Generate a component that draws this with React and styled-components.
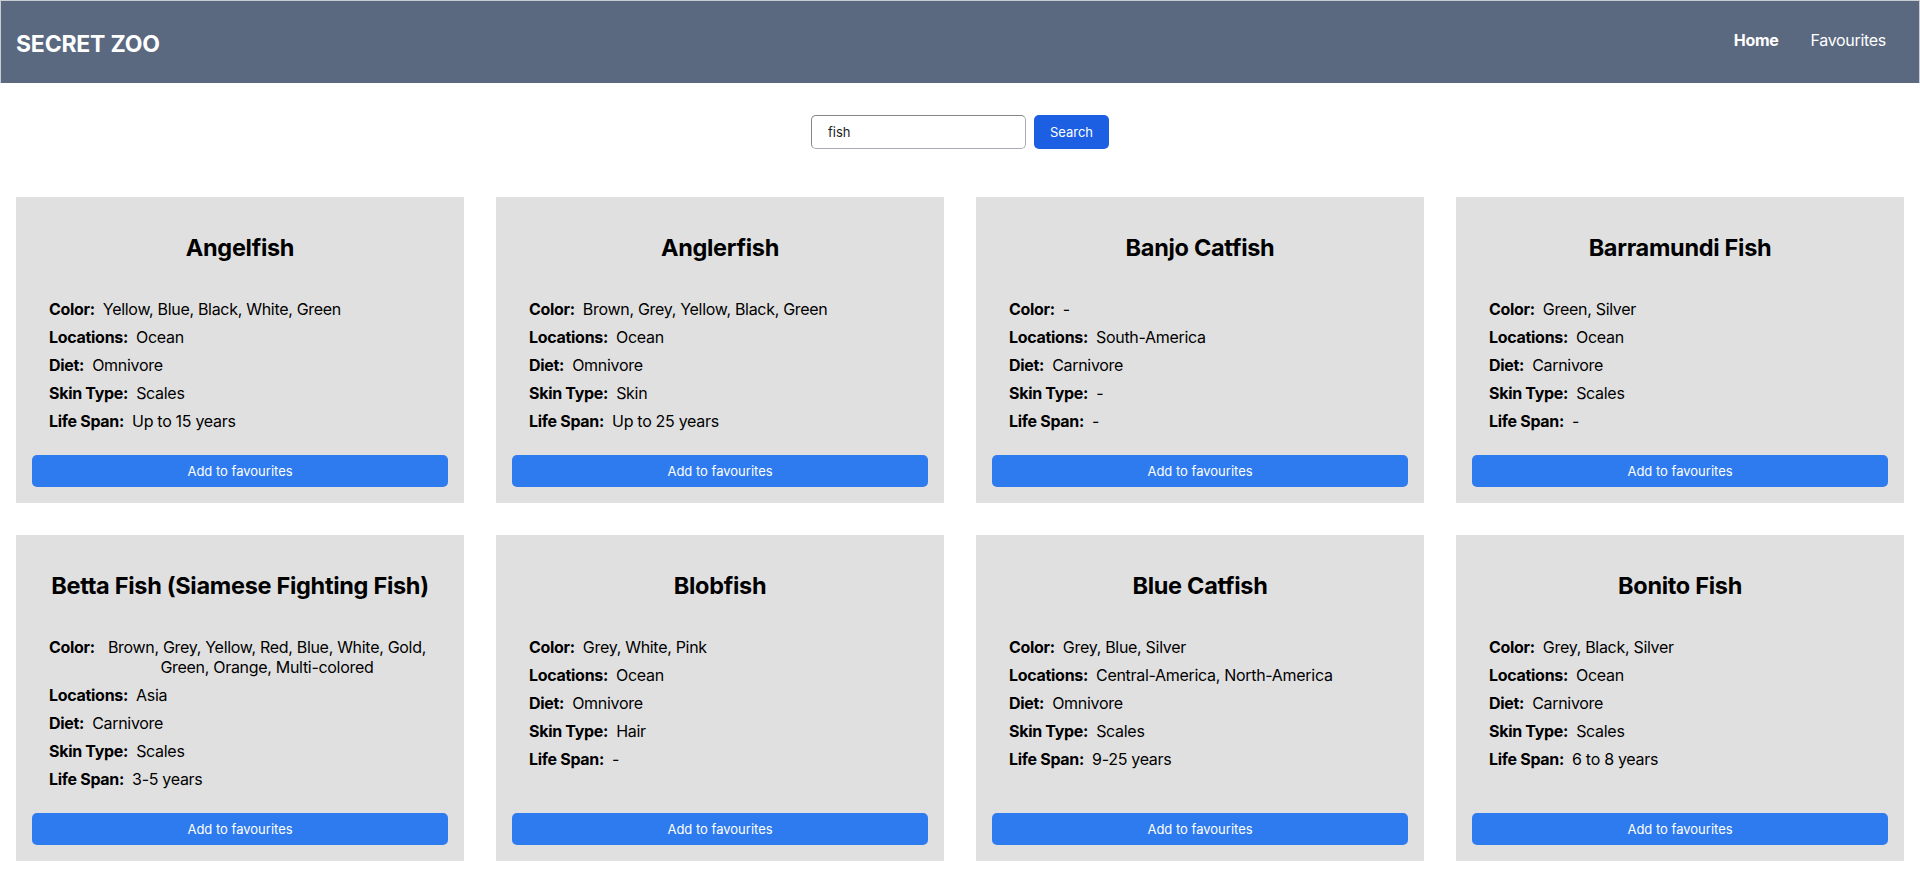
import styled, { createGlobalStyle } from 'styled-components'

const GlobalStyle = createGlobalStyle`
  * { box-sizing: border-box; }
  body {
    margin: 0;
    background: #fff;
    font-family: Inter, 'Noto Sans', sans-serif;
    color: #000;
  }
`

const animals = [
  { name: 'Angelfish', color: 'Yellow, Blue, Black, White, Green', locations: 'Ocean', diet: 'Omnivore', skin: 'Scales', life: 'Up to 15 years' },
  { name: 'Anglerfish', color: 'Brown, Grey, Yellow, Black, Green', locations: 'Ocean', diet: 'Omnivore', skin: 'Skin', life: 'Up to 25 years' },
  { name: 'Banjo Catfish', color: '-', locations: 'South-America', diet: 'Carnivore', skin: '-', life: '-' },
  { name: 'Barramundi Fish', color: 'Green, Silver', locations: 'Ocean', diet: 'Carnivore', skin: 'Scales', life: '-' },
  { name: 'Betta Fish (Siamese Fighting Fish)', color: 'Brown, Grey, Yellow, Red, Blue, White, Gold, Green, Orange, Multi-colored', locations: 'Asia', diet: 'Carnivore', skin: 'Scales', life: '3-5 years' },
  { name: 'Blobfish', color: 'Grey, White, Pink', locations: 'Ocean', diet: 'Omnivore', skin: 'Hair', life: '-' },
  { name: 'Blue Catfish', color: 'Grey, Blue, Silver', locations: 'Central-America, North-America', diet: 'Omnivore', skin: 'Scales', life: '9-25 years' },
  { name: 'Bonito Fish', color: 'Grey, Black, Silver', locations: 'Ocean', diet: 'Carnivore', skin: 'Scales', life: '6 to 8 years' },
]

const Header = styled.header`
  display: flex;
  align-items: center;
  justify-content: space-between;
  height: 83px;
  padding: 0 33px 0 15px;
  background: #5a6980;
  border: 1px solid #c9cdd3;
  border-bottom: none;
`

const Logo = styled.h1`
  margin: 0;
  padding-top: 4px;
  color: #fff;
  font-size: 23px;
  font-weight: 700;
  letter-spacing: -0.2px;
`

const Nav = styled.nav`
  display: flex;
  gap: 32px;
  padding-bottom: 4px;
`

const NavLink = styled.a`
  color: #fff;
  font-size: 16px;
  font-weight: ${p => (p.$active ? 700 : 400)};
  letter-spacing: -0.3px;
  text-decoration: none;
  cursor: pointer;
`

const SearchBar = styled.form`
  display: flex;
  justify-content: center;
  gap: 8px;
  margin: 32px 0 48px;
`

const SearchInput = styled.input`
  width: 215px;
  height: 34px;
  padding: 0 16px;
  border: 1px solid #a9acb2;
  border-top-color: #858585;
  border-left-color: #858585;
  border-radius: 5px;
  font-family: inherit;
  font-size: 13px;
  color: #222;
  outline: none;
`

const SearchButton = styled.button`
  width: 75px;
  height: 34px;
  border: none;
  border-radius: 5px;
  background: #1c5fe3;
  color: #fff;
  font-family: inherit;
  font-size: 13px;
`

const Grid = styled.main`
  display: grid;
  grid-template-columns: repeat(4, 448px);
  gap: 32px;
  padding: 0 16px 16px;
`

const Card = styled.article`
  display: flex;
  flex-direction: column;
  padding: 16px;
  background: #e0e0e0;
`

const Title = styled.h2`
  margin: 20px 0;
  line-height: 30px;
  font-size: 23.5px;
  font-weight: 700;
  letter-spacing: -0.3px;
  text-align: center;
`

const Details = styled.ul`
  display: flex;
  flex-direction: column;
  gap: 8px;
  margin: 16px 17px 24px;
  padding: 0;
  list-style: none;
`

const Row = styled.li`
  display: flex;
  gap: 8px;
  font-size: 16px;
  line-height: 20px;
  letter-spacing: -0.3px;
`

const Label = styled.b`
  flex: none;
  font-weight: 700;
`

const Value = styled.span`
  text-align: center;
`

const AddButton = styled.button`
  margin-top: auto;
  height: 32px;
  border: none;
  border-radius: 5px;
  background: #2e7bef;
  color: #fff;
  font-family: inherit;
  font-size: 13px;
`

const AnimalCard = ({ animal }) => (
  <Card>
    <Title>{animal.name}</Title>
    <Details>
      <Row><Label>Color:</Label><Value>{animal.color}</Value></Row>
      <Row><Label>Locations:</Label><Value>{animal.locations}</Value></Row>
      <Row><Label>Diet:</Label><Value>{animal.diet}</Value></Row>
      <Row><Label>Skin Type:</Label><Value>{animal.skin}</Value></Row>
      <Row><Label>Life Span:</Label><Value>{animal.life}</Value></Row>
    </Details>
    <AddButton>Add to favourites</AddButton>
  </Card>
)

const App = () => (
  <>
    <GlobalStyle />
    <Header>
      <Logo>SECRET ZOO</Logo>
      <Nav>
        <NavLink $active>Home</NavLink>
        <NavLink>Favourites</NavLink>
      </Nav>
    </Header>
    <SearchBar onSubmit={e => e.preventDefault()}>
      <SearchInput defaultValue='fish' />
      <SearchButton>Search</SearchButton>
    </SearchBar>
    <Grid>
      {animals.map(a => <AnimalCard key={a.name} animal={a} />)}
    </Grid>
  </>
)

export default App
